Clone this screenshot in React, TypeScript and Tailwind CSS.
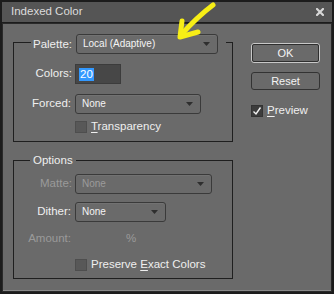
import React from "react";

const F = { fontFamily: '"Liberation Sans", Arial, sans-serif' };

function Dropdown({ w, text, disabled }: { w: string; text: string; disabled?: boolean }) {
  return (
    <div
      className={`${w} h-[20px] shrink-0 flex items-center justify-between rounded-[3px] border border-[#3a3a3a] bg-[#6a6a6a] pl-[6px] pr-[7px] shadow-[inset_0_1px_0_rgba(255,255,255,0.06)]`}
    >
      <span className={`text-[10px] leading-none ${disabled ? "text-[#9b9b9b]" : "text-[#f4f4f4]"}`}>{text}</span>
      <svg width="7" height="4" viewBox="0 0 7 4">
        <path d="M0 0 L7 0 L3.5 4 Z" fill="#2e2e2e" />
      </svg>
    </div>
  );
}

function Check({ checked }: { checked?: boolean }) {
  return (
    <div
      className={`w-[12px] h-[12px] shrink-0 border ${checked ? "bg-[#3c3c3c] border-[#333]" : "bg-[#585858] border-[#4e4e4e]"} flex items-center justify-center`}
    >
      {checked && (
        <svg width="10" height="10" viewBox="0 0 10 10">
          <path d="M1.5 5.5 L4 8 L8.5 1.5" stroke="#f2f2f2" strokeWidth="1.4" fill="none" />
        </svg>
      )}
    </div>
  );
}

export default function App() {
  return (
    <div
      style={F}
      className="relative w-[334px] h-[294px] bg-[#1c1c1c] p-[2px] flex flex-col text-[11.5px] text-[#efefef] overflow-hidden"
    >
      {/* title bar */}
      <div className="h-[20px] shrink-0 bg-[#555555] flex items-center justify-between pl-[9px] pr-[8px]">
        <span className="text-[11.5px] text-[#dcdcdc]">Indexed Color</span>
        <svg width="8" height="8" viewBox="0 0 8 8">
          <path d="M1 1 L7 7 M7 1 L1 7" stroke="#d8d8d8" strokeWidth="2.2" strokeLinecap="square" />
        </svg>
      </div>
      {/* body */}
      <div className="flex-1 mt-[1px] bg-[#6a6a6a] border border-[#2a2a2a] flex shadow-[inset_0_-1px_0_#8a8a8a]">
        {/* left column */}
        <div className="ml-[10px] flex flex-col">
          {/* Palette group */}
          <div className="mt-[18px] w-[220px] h-[100px] border border-[#1f1f1f] flex flex-col">
            <div className="mt-[-9px] flex items-center h-[20px]">
              <div className="w-[17px]" />
              <div className="w-[45px] bg-[#6a6a6a] text-right pr-[4px] leading-[20px]">Palette:</div>
              <Dropdown w="w-[142px]" text="Local (Adaptive)" />
              <div className="w-[8px] h-[20px] bg-[#6a6a6a]" />
            </div>
            <div className="mt-[10px] flex items-center h-[20px]">
              <div className="w-[61px] text-right pr-[3px]">Colors:</div>
              <div className="w-[46px] h-[20px] bg-[#474747] border border-[#3c3c3c] flex items-center pl-[3px]">
                <span className="bg-[#3399ff] text-white text-[11.5px] leading-[13px] px-[1px]">20</span>
              </div>
            </div>
            <div className="mt-[10px] flex items-center h-[20px]">
              <div className="w-[61px] text-right pr-[4px]">Forced:</div>
              <Dropdown w="w-[126px]" text="None" />
            </div>
            <div className="mt-[7px] flex items-center h-[12px]">
              <div className="w-[61px]" />
              <Check />
              <span className="ml-[4px]">
                <span className="underline underline-offset-2">T</span>ransparency
              </span>
            </div>
          </div>
          {/* Options group */}
          <div className="relative mt-[18px] w-[220px] h-[119px] border border-[#1f1f1f] flex flex-col">
            <div className="absolute left-[16px] top-[-9px] px-[3px] bg-[#6a6a6a] leading-[16px]">Options</div>
            <div className="mt-[13px] flex items-center h-[20px]">
              <div className="w-[61px] text-right pr-[3px] text-[#9a9a9a]">Matte:</div>
              <Dropdown w="w-[137px]" text="None" disabled />
            </div>
            <div className="mt-[8px] flex items-center h-[20px]">
              <div className="w-[61px] text-right pr-[4px]">Dither:</div>
              <Dropdown w="w-[91px]" text="None" />
            </div>
            <div className="mt-[9px] flex items-center h-[16px] text-[#9a9a9a]">
              <div className="w-[61px] text-right pr-[4px]">Amount:</div>
              <span className="ml-[51px]">%</span>
            </div>
            <div className="mt-[12px] flex items-center h-[12px]">
              <div className="w-[61px]" />
              <Check />
              <span className="ml-[4px]">
                Preserve <span className="underline underline-offset-2">E</span>xact Colors
              </span>
            </div>
          </div>
        </div>
        {/* right column */}
        <div className="ml-[18px] flex flex-col">
          <div className="mt-[19px] w-[69px] h-[20px] rounded-[3px] border border-[#c8c8c8] p-0">
            <div className="w-full h-full rounded-[2px] border border-[#2f2f2f] flex items-center justify-center text-[11px] text-[#f4f4f4]">
              OK
            </div>
          </div>
          <div className="mt-[9px] w-[69px] h-[18px] rounded-[3px] border border-[#333] flex items-center justify-center text-[11px] text-[#f4f4f4]">
            Reset
          </div>
          <div className="mt-[15px] flex items-center h-[12px]">
            <Check checked />
            <span className="ml-[4px]">
              <span className="underline underline-offset-2">P</span>review
            </span>
          </div>
        </div>
      </div>
      {/* yellow annotation arrow */}
      <svg className="absolute left-[170px] top-0" width="50" height="45" viewBox="170 0 50 45">
        <path d="M213 5 Q197 17 181 35" stroke="#f7ee16" strokeWidth="5" fill="none" strokeLinecap="round" />
        <path d="M182 21 L180 37 L198 32" stroke="#f7ee16" strokeWidth="5" fill="none" strokeLinecap="round" strokeLinejoin="round" />
      </svg>
    </div>
  );
}
